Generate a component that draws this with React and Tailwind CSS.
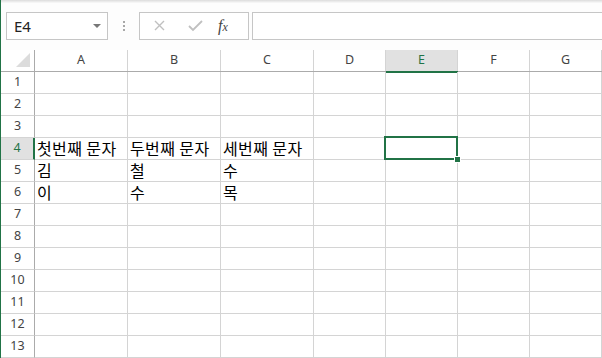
import React from "react";

const cols = [
  { name: "A", w: "w-[93px]" },
  { name: "B", w: "w-[93px]" },
  { name: "C", w: "w-[93px]" },
  { name: "D", w: "w-[72px]" },
  { name: "E", w: "w-[72px]" },
  { name: "F", w: "w-[72px]" },
  { name: "G", w: "w-[72px]" },
];

const data = {
  4: ["첫번째 문자", "두번째 문자", "세번째 문자"],
  5: ["김", "철", "수"],
  6: ["이", "수", "목"],
};

const rows = Array.from({ length: 13 }, (_, i) => i + 1);

export default function App() {
  return (
    <div
      className="w-[602px] h-[358px] overflow-hidden bg-white border-l border-[#217346] flex flex-col"
      style={{ fontFamily: '"Noto Sans", "Noto Sans CJK KR", sans-serif' }}
    >
      {/* top shadow strip */}
      <div className="h-[3px] bg-gradient-to-b from-[#dcdcdc] to-[#fafafa] shrink-0" />

      {/* formula bar */}
      <div className="h-[47px] shrink-0 flex items-start pt-[9px] pl-[5px] bg-[#fdfdfd]">
        <div className="w-[102px] h-[28px] border border-[#c6c6c6] bg-white flex items-center pl-[7px] pr-[6px]">
          <span className="text-[15px] text-[#222] leading-none">E4</span>
          <div className="ml-auto w-0 h-0 border-l-[4px] border-r-[4px] border-t-[4px] border-l-transparent border-r-transparent border-t-[#777]" />
        </div>
        <div className="w-[31px] h-[28px] flex flex-col items-center justify-center gap-[2px]">
          <span className="w-[2px] h-[2px] bg-[#a8a8a8]" />
          <span className="w-[2px] h-[2px] bg-[#a8a8a8]" />
          <span className="w-[2px] h-[2px] bg-[#a8a8a8]" />
        </div>
        <div className="w-[110px] h-[28px] border border-[#c6c6c6] bg-white flex items-center">
          <svg width="36" height="26" viewBox="0 0 36 26" className="ml-[2px]">
            <path d="M13 8 L22 17 M22 8 L13 17" stroke="#c0c0c0" strokeWidth="1.4" />
          </svg>
          <svg width="36" height="26" viewBox="0 0 36 26">
            <path d="M11 13 L15 17 L24 8" stroke="#c0c0c0" strokeWidth="1.8" fill="none" />
          </svg>
          <span
            className="ml-[4px] text-[16px] text-[#444] italic leading-none"
            style={{ fontFamily: '"Liberation Serif", serif' }}
          >
            f<span className="text-[12px]">x</span>
          </span>
        </div>
        <div className="ml-[3px] flex-1 h-[28px] border border-r-0 border-[#c6c6c6] bg-white" />
      </div>

      {/* column headers */}
      <div className="flex h-[22px] shrink-0 border-b border-[#ababab] text-[12.5px] text-[#444]">
        <div className="w-[34px] border-r border-[#ababab] relative">
          <svg width="16" height="16" className="absolute right-[3px] bottom-[3px]">
            <path d="M15 1 L15 15 L1 15 Z" fill="#dcdcdc" />
          </svg>
        </div>
        {cols.map((c) =>
          c.name === "E" ? (
            <div
              key={c.name}
              className={`${c.w} border-r border-[#d4d4d4] bg-[#e1e1e1] text-[#217346] flex items-center justify-center relative`}
            >
              <span className="-mt-[1px]">{c.name}</span>
              <div className="absolute left-0 right-[-1px] bottom-[-2px] h-[2px] bg-[#217346]" />
            </div>
          ) : (
            <div
              key={c.name}
              className={`${c.w} border-r border-[#d4d4d4] flex items-center justify-center`}
            >
              <span className="-mt-[1px]">{c.name}</span>
            </div>
          )
        )}
      </div>

      {/* rows */}
      {rows.map((r) => (
        <div key={r} className="flex h-[22px] shrink-0">
          {r === 4 ? (
            <div className="w-[34px] border-b border-[#d4d4d4] border-r-2 border-r-[#217346] bg-[#e1e1e1] text-[#217346] text-[12.5px] flex items-center justify-center">
              {r}
            </div>
          ) : (
            <div className="w-[34px] border-b border-[#d4d4d4] border-r border-r-[#ababab] text-[#444] text-[12.5px] flex items-center justify-center">
              {r}
            </div>
          )}
          {cols.map((c, ci) => (
            <div
              key={c.name}
              className={`${c.w} border-r border-b border-[#d4d4d4] relative flex items-end pl-[2px] pb-[1px]`}
            >
              {data[r] && data[r][ci] && (
                <span
                  className="text-[16px] tracking-[0.4px] text-black leading-[19px] whitespace-nowrap"
                  style={{ fontFamily: '"Noto Sans CJK KR", sans-serif' }}
                >
                  {data[r][ci]}
                </span>
              )}
              {r === 4 && c.name === "E" && (
                <>
                  <div className="absolute z-10 left-[-2px] top-[-2px] right-[-1px] bottom-[-1px] border-2 border-[#217346]" />
                  <div className="absolute z-10 left-[68px] top-[18px] w-[7px] h-[7px] bg-[#217346] border border-white" />
                </>
              )}
            </div>
          ))}
        </div>
      ))}
    </div>
  );
}
